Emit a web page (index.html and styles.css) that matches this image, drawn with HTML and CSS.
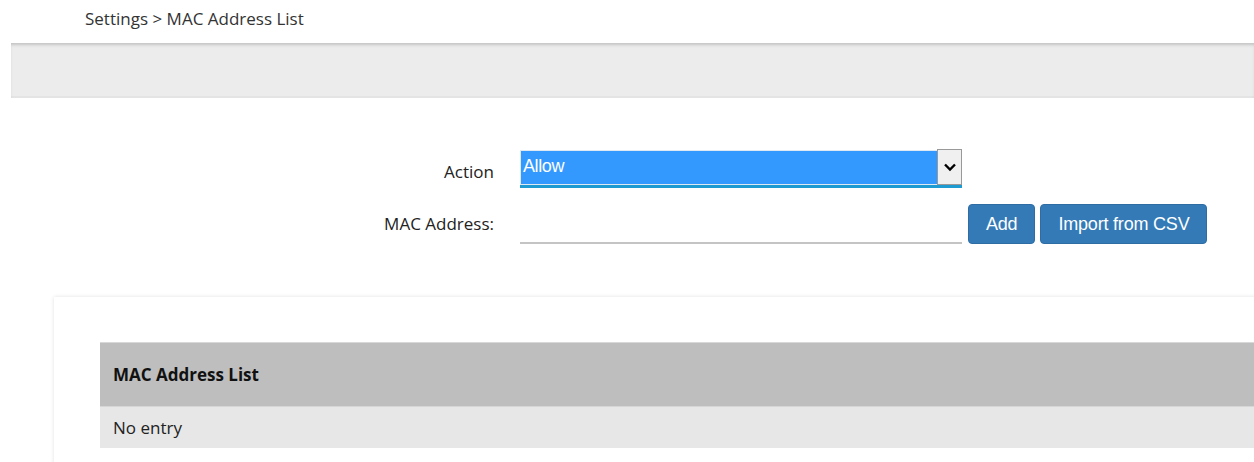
FILE: index.html
```html
<!DOCTYPE html>
<html lang="en">
<head>
<meta charset="utf-8">
<title>MAC Address List</title>
<link rel="stylesheet" href="styles.css">
</head>
<body>
  <div class="crumb">Settings &gt; MAC Address List</div>
  <div class="toolbar"></div>

  <form class="mac-form">
    <label class="lbl lbl-action" for="action">Action</label>
    <div class="select-wrap">
      <div class="select-value" id="action">Allow</div>
      <div class="select-btn">
        <svg width="14" height="10" viewBox="0 0 14 10"><path d="M2 2.5 L7 7.5 L12 2.5" fill="none" stroke="#000" stroke-width="2.4"/></svg>
      </div>
    </div>
    <div></div>

    <label class="lbl" for="mac">MAC Address:</label>
    <div class="input-wrap"><input id="mac" class="text-input" type="text"></div>
    <div class="btns">
      <button type="button" class="btn">Add</button>
      <button type="button" class="btn">Import from CSV</button>
    </div>
  </form>

  <section class="card">
    <table class="list">
      <thead><tr><th>MAC Address List</th></tr></thead>
      <tbody><tr><td>No entry</td></tr></tbody>
    </table>
  </section>
</body>
</html>
```

FILE: styles.css
```css
html, body {
  margin: 0;
  padding: 0;
  background: #fff;
  overflow: hidden;
}

body {
  font-family: "Open Sans", "Noto Sans", sans-serif;
  font-size: 17px;
  color: #222;
  width: 1254px;
  height: 462px;
}

.crumb {
  height: 43px;
  line-height: 37px;
  padding-left: 85px;
  color: #333;
}

.toolbar {
  margin-left: 11px;
  height: 55px;
  background: #ececec;
  box-shadow: inset 0 3px 3px -1px #c4c4c4, inset 0 -2px 0 #e4e4e4;
}

.mac-form {
  display: grid;
  grid-template-columns: 494px 442px auto;
  column-gap: 26px;
  row-gap: 15px;
  align-items: center;
  margin-top: 52px;
}

.lbl {
  text-align: right;
  color: #222;
}

.lbl-action {
  padding-top: 4px;
}

.select-wrap {
  display: flex;
  height: 38px;
  box-sizing: border-box;
  border-bottom: 3px solid #1e9bd0;
}

.select-value {
  flex: 1;
  background: #3399ff;
  color: #fff;
  font-family: "Liberation Sans", Arial, sans-serif;
  font-size: 18px;
  line-height: 30px;
  padding-left: 2px;
  border: 1px solid #dfe9f3;
  border-right: none;
  letter-spacing: -0.4px;
}

.select-btn {
  width: 25px;
  box-sizing: border-box;
  border: 1px solid #999;
  background: #f0f0f0;
  display: flex;
  align-items: center;
  justify-content: center;
  margin-top: -1px;
}

.input-wrap {
  height: 40px;
  box-sizing: border-box;
  border-bottom: 2px solid #c4c4c4;
}

.text-input {
  width: 100%;
  height: 100%;
  border: none;
  outline: none;
  background: transparent;
  font: inherit;
  padding: 0;
}

.btns {
  display: flex;
  gap: 5px;
  margin-left: -20px;
  margin-top: 1px;
}

.btn {
  height: 40px;
  padding: 0 17px;
  background: #337ab7;
  color: #fff;
  border: 1px solid #2e6da4;
  border-radius: 4px;
  font-family: "Liberation Sans", Arial, sans-serif;
  font-size: 18px;
  letter-spacing: -0.2px;
}

.card {
  margin-top: 53px;
  margin-left: 54px;
  width: 1300px;
  padding: 45px 0 30px 46px;
  background: #fff;
  box-shadow: 0 0 4px rgba(0, 0, 0, 0.12);
}

.list {
  width: 100%;
  border-collapse: collapse;
}

.list th {
  text-align: left;
  background: #bebebe;
  height: 63px;
  padding: 0 13px;
  font-weight: 700;
  color: #111;
  border-top: 1px solid #d8d8d8;
}

.list td {
  background: #e7e7e7;
  height: 41px;
  padding: 0 13px;
  color: #222;
  border-top: 1px solid #d6d6d6;
}
```
